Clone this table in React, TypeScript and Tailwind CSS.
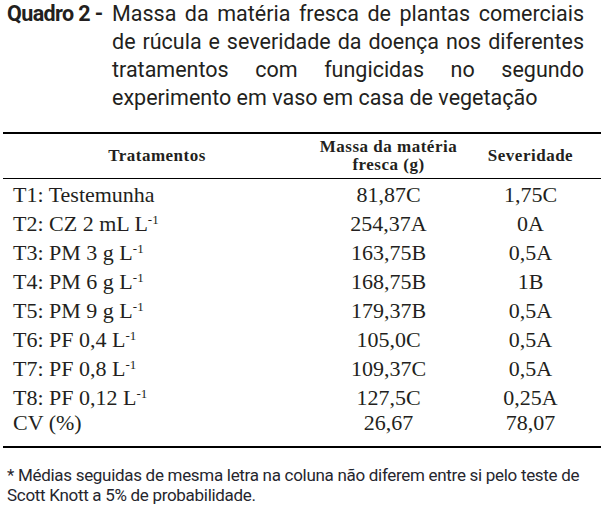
const rows: [string, boolean, string, string][] = [
  ["T1: Testemunha", false, "81,87C", "1,75C"],
  ["T2: CZ 2 mL L", true, "254,37A", "0A"],
  ["T3: PM 3 g L", true, "163,75B", "0,5A"],
  ["T4: PM 6 g L", true, "168,75B", "1B"],
  ["T5: PM 9 g L", true, "179,37B", "0,5A"],
  ["T6: PF 0,4 L", true, "105,0C", "0,5A"],
  ["T7: PF 0,8 L", true, "109,37C", "0,5A"],
  ["T8: PF 0,12 L", true, "127,5C", "0,25A"],
];

const captionLines = [
  "Massa da matéria fresca de plantas comerciais",
  "de rúcula e severidade da doença nos diferentes",
  "tratamentos com fungicidas no segundo",
];

export default function App() {
  return (
    <div className="w-[603px] h-[527px] bg-white text-[#231f20] overflow-hidden">
      {/* Caption with hanging indent */}
      <div className="flex pl-[7px] pr-[19px] font-['Roboto',sans-serif] text-[21.5px] leading-[28px]">
        <div className="w-[105px] shrink-0 font-bold tracking-[-0.6px] whitespace-nowrap">Quadro 2 -</div>
        <div className="flex-1">
          {captionLines.map((line) => (
            <p key={line} className="text-justify [text-align-last:justify]">
              {line}
            </p>
          ))}
          <p>experimento em vaso em casa de vegetação</p>
        </div>
      </div>

      {/* Table */}
      <table className="mt-[20px] ml-[3px] w-[598px] border-collapse font-['Liberation_Serif',serif]">
        <thead>
          <tr className="border-t-2 border-b border-black text-[17px] font-bold tracking-[0.5px] leading-[18px]">
            <th className="w-[314px] text-center pr-[6px] py-[4px]">Tratamentos</th>
            <th className="w-[143px] text-center py-[4px]">
              Massa da matéria
              <br />
              fresca (g)
            </th>
            <th className="text-center py-[4px]">Severidade</th>
          </tr>
        </thead>
        <tbody className="text-[22px]">
          {rows.map(([name, sup, mass, sev], i) => (
            <tr key={name} className="leading-[29px]">
              <td className={`pl-[10px] whitespace-nowrap ${i === 0 ? "pt-[1px]" : ""}`}>
                {name}
                {sup && <span className="relative -top-[7px] text-[13px] leading-none">-1</span>}
              </td>
              <td className="text-center">{mass}</td>
              <td className="text-center">{sev}</td>
            </tr>
          ))}
          <tr className="leading-[22px] border-b-2 border-black">
            <td className="pl-[10px] pb-[12px]">CV (%)</td>
            <td className="text-center pb-[12px]">26,67</td>
            <td className="text-center pb-[12px]">78,07</td>
          </tr>
        </tbody>
      </table>

      {/* Footnote */}
      <p className="mt-[17px] pl-[7px] font-['Roboto',sans-serif] text-[17px] tracking-[-0.3px] leading-[20px] whitespace-nowrap text-[#26262e]">
        * Médias seguidas de mesma letra na coluna não diferem entre si pelo teste de
        <br />
        Scott Knott a 5% de probabilidade.
      </p>
    </div>
  );
}
